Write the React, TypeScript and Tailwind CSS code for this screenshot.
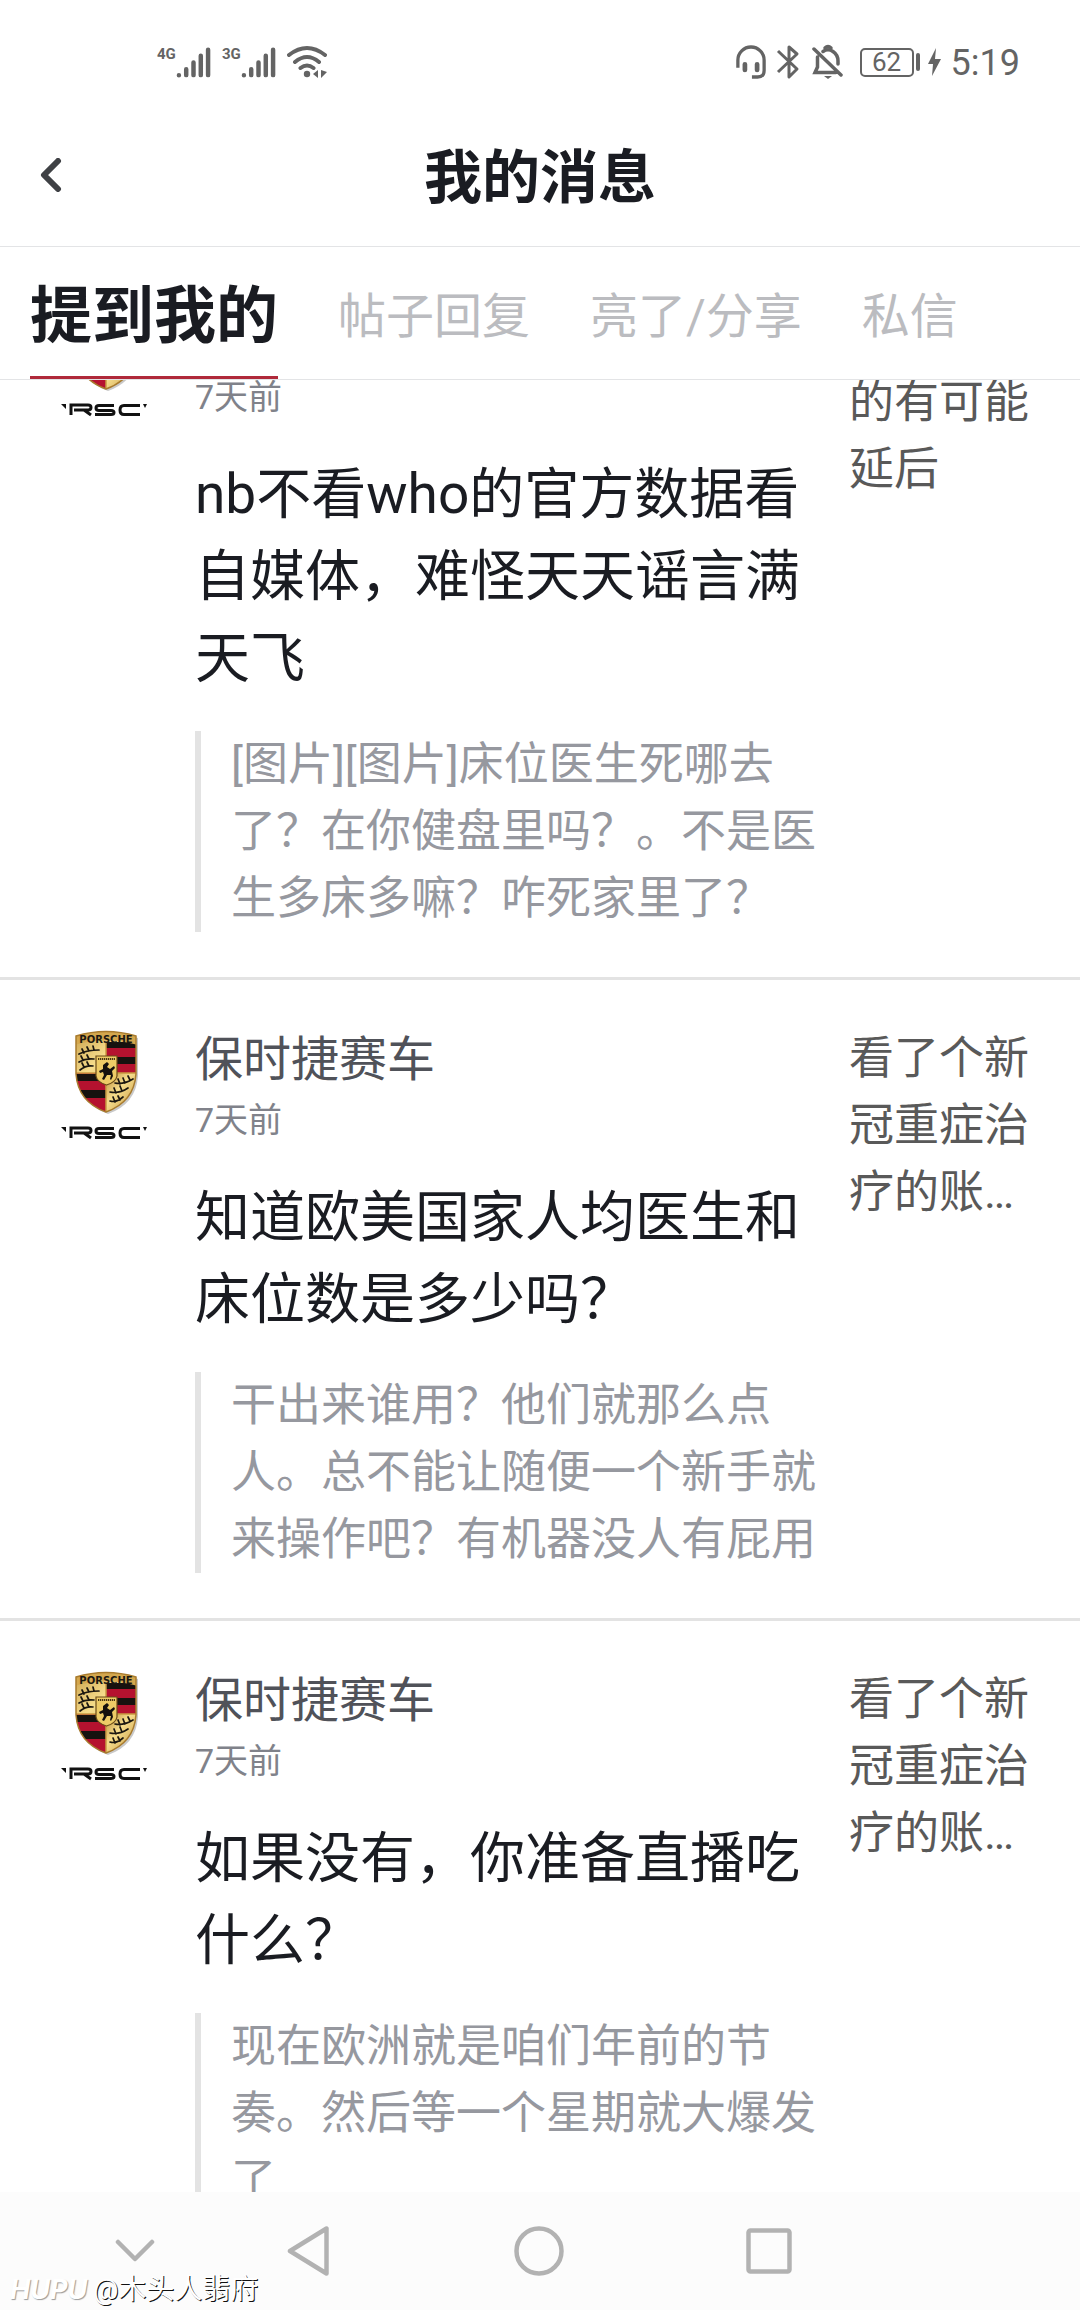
import { useLayoutEffect, useRef } from 'react';

type Message = {
  id: number;
  name: string;
  time: string;
  title: string;
  quote: string;
  source: string;
};

const tabs = ['提到我的', '帖子回复', '亮了/分享', '私信'];

const messages: Message[] = [
  {
    id: 1,
    name: '保时捷赛车',
    time: '7天前',
    title: 'nb不看who的官方数据看自媒体，难怪天天谣言满天飞',
    quote: '[图片][图片]床位医生死哪去了？在你健盘里吗？。不是医生多床多嘛？咋死家里了？',
    source: '东京奥运的有可能延后',
  },
  {
    id: 2,
    name: '保时捷赛车',
    time: '7天前',
    title: '知道欧美国家人均医生和床位数是多少吗？',
    quote: '干出来谁用？他们就那么点人。总不能让随便一个新手就来操作吧？有机器没人有屁用',
    source: '看了个新冠重症治疗的账…',
  },
  {
    id: 3,
    name: '保时捷赛车',
    time: '7天前',
    title: '如果没有，你准备直播吃什么？',
    quote: '现在欧洲就是咱们年前的节奏。然后等一个星期就大爆发了',
    source: '看了个新冠重症治疗的账…',
  },
];

const Signal = ({ label }: { label: string }) => (
  <div className="flex items-start">
    <span className="w-[19px] whitespace-nowrap font-[Roboto] text-[15px] font-bold leading-[18px]">{label}</span>
    <svg className="shrink-0" width="35" height="34" viewBox="0 0 36 34" stroke="currentColor" strokeWidth="4.6" strokeLinecap="round">
      <path d="M3 30.5v.1M10.500 24.500v6M18 17.500v13M25.500 10.500v20M33 4.500v26" />
    </svg>
  </div>
);

const StatusBar = () => (
  <div className="flex h-[120px] shrink-0 items-center justify-between pl-[157px] pr-[60px] pt-1 text-[#646464]">
    <div className="flex items-center gap-[11px]">
      <Signal label="4G" />
      <Signal label="3G" />
      <svg width="40" height="34" viewBox="0 0 40 34" fill="none" stroke="currentColor" strokeWidth="4" strokeLinecap="round">
        <path d="M2 10Q20-4 38 10M8 17Q20 7 32 17M13.500 23Q20 18 26.500 23" />
        <circle cx="20" cy="29" r="3.200" fill="currentColor" stroke="none" />
        <path d="M31 25v8l-5-4zM34 25v8l6-6z" fill="currentColor" stroke="none" />
      </svg>
    </div>
    <div className="flex items-center">
      <svg width="30" height="34" viewBox="0 0 32 36" fill="none" stroke="currentColor" strokeWidth="3.500">
        <path d="M2 24V16a14 14 0 0 1 28 0v11q0 7-7 7h-6" />
        <path d="M9.500 20.500v6M22.500 20.500v6" strokeWidth="5" strokeLinecap="round" />
      </svg>
      <svg className="ml-2.5" width="24" height="36" viewBox="0 0 24 36" fill="none" stroke="currentColor" strokeWidth="3" strokeLinejoin="round">
        <path d="M2 7l19 18-8 8V3l8 7L2 28" />
      </svg>
      <svg className="ml-3" width="32" height="36" viewBox="0 0 32 36" fill="none" stroke="currentColor" strokeWidth="3.500" strokeLinecap="round">
        <path d="M2 5l27 26M11 7.500Q16 4 21 7.500T26 17v3M5.500 13v10L3 28.500h21" />
        <path d="M13 4q3-3 6 0" />
        <path d="M12 32h8l-4 3z" fill="currentColor" stroke="none" />
      </svg>
      <div className="ml-4 flex h-[29px] w-[54px] items-center justify-center rounded-[5px] border-2 border-current font-[Roboto] text-[26px] leading-none">
        62
      </div>
      <div className="ml-0.5 h-[18px] w-1 rounded-sm bg-current" />
      <svg className="ml-2" width="13" height="28" viewBox="0 0 13 28" fill="currentColor">
        <path d="M8 0L0 16h5l-1 12 9-17H7z" />
      </svg>
      <span className="ml-2.5 pt-0.5 font-[Roboto] text-[36px] leading-none">5:19</span>
    </div>
  </div>
);

const Header = () => (
  <header className="grid h-[127px] shrink-0 grid-cols-3 items-center border-b border-[#e3e4e6] px-10 pb-4">
    <button type="button" aria-label="返回" className="w-fit">
      <svg width="22" height="34" viewBox="0 0 22 34" fill="none" stroke="#3f4145" strokeWidth="6" strokeLinecap="round" strokeLinejoin="round">
        <path d="M18 3L4 17l14 14" />
      </svg>
    </button>
    <h1 className="pt-1.5 text-center text-[58px] font-bold leading-[80px]">我的消息</h1>
  </header>
);

const Tabs = () => (
  <nav className="flex h-[133px] shrink-0 gap-[60px] border-b border-[#e3e4e6] px-[30px]">
    {tabs.map((tab, i) => (
      <button
        key={tab}
        type="button"
        className={
          i === 0
            ? 'border-b-3 border-[#b0293a] pt-2.5 text-[62px] font-bold'
            : 'border-b-3 border-transparent pt-2.5 text-[48px] text-[#bbbcc0]'
        }
      >
        {tab}
      </button>
    ))}
  </nav>
);

const Avatar = () => (
  <svg className="mt-[3px]" width="88" height="116" viewBox="0 0 88 116" role="img" aria-label="Porsche">
    <defs>
      <linearGradient id="gold" x1="0" y1="0" x2="1" y2="1">
        <stop offset="0" stopColor="#b98a35" />
        <stop offset="0.4" stopColor="#f6dd8c" />
        <stop offset="1" stopColor="#bd8c37" />
      </linearGradient>
      <clipPath id="shield">
        <path d="M16 8Q46-1 76 8V46Q74 74 46 84Q18 74 16 46z" />
      </clipPath>
    </defs>
    <path d="M18 10Q48 1 78 10V48Q76 76 48 86Q20 76 18 48z" fill="#c9c9c9" />
    <g clipPath="url(#shield)">
      <path d="M0 0h88v90H0z" fill="url(#gold)" />
      <path d="M46 19h32v26H46zM14 45h32v40H14z" fill="#b5122f" />
      <path d="M46 14h32v6H46zM46 29h32v7H46zM14 46h32v7H14zM14 62h32v8H14z" fill="#17120f" />
      <path d="M46 45h32v40H46z" fill="url(#gold)" />
      <path d="M14 0h64v17Q46 8 14 17z" fill="#d3a74e" />
      <path d="M46 14v73M16 45h60" stroke="#c89b42" strokeWidth="1.500" />
      <g fill="none" stroke="#1b1710" strokeWidth="1.700" strokeLinecap="round">
        <path d="M19 26q8-4 20-4M24 25l-2-4M29 23l-2-4M34 22l-1-4M19 34q7-4 15-3M23 32l-2-4M29 31l-2-4M20 42q6-5 13-4M24 39l-2-4M29 38l-2-4" />
        <path d="M55 55q8 2 18-4M60 56l-2-5M65 55l-2-5M70 52l-2-4M50 64q9 2 18-4M56 65l-2-5M62 63l-2-5M50 73q6 2 13-4M55 74l-2-5M60 72l-2-4" />
      </g>
    </g>
    <path d="M16 8Q46-1 76 8V46Q74 74 46 84Q18 74 16 46z" fill="none" stroke="#a87b2e" strokeWidth="1.500" />
    <path d="M36 28h21v20q-1 6-10.500 9Q37 54 36 48z" fill="#edcb66" stroke="#6b4c18" strokeWidth="1.200" />
    <path
      d="M43 37l4-3 2 2-2 3 3 2 4-3 1 2-3 3 1 5-2 4-1-1 1-4-4 0-3 5-2-1 2-4-1-3-3 1-1-2 4-2z"
      fill="#14110d"
    />
    <text x="46" y="15" textAnchor="middle" fill="#1b1710" className="font-['DejaVu_Sans'] text-[10px] font-bold">
      PORSCHE
    </text>
    <path d="M38 31h17" stroke="#4a3714" strokeWidth="2" strokeDasharray="1.300 0.700" />
    <g fill="none" stroke="#111" strokeWidth="3">
      <path d="M11 110v-10h17q3 0 3 2.500t-3 2.500H14M24 105l7 5M54 100.500H39q-3 0-3 2.500t3 2.500h12q3 0 3 2t-3 2H35M80 100.500H64q-4 0-4 4.500t4 4.500h16" />
    </g>
    <path d="M1 99h5v5zM83 99h4l-2 4z" fill="#111" />
  </svg>
);

const MessageItem = ({ message }: { message: Message }) => (
  <li className="flex items-start border-b-3 border-[#e3e3e3] px-[30px] pb-[45px] pt-[45px]">
    <div className="ml-[30px] shrink-0">
      <Avatar />
    </div>
    <div className="ml-[47px] min-w-0 flex-1 pt-[3px]">
      <p className="text-[48px] leading-[64px] text-[#505259]">{message.name}</p>
      <time className="block text-[34px] leading-[56px] text-[#80828a]">{message.time}</time>
      <h2 className="mt-7 text-[55px] leading-[82px]">{message.title}</h2>
      <blockquote className="mt-8 border-l-6 border-[#e3e3e3] pl-[30px] text-[45px] leading-[67px] text-[#96989f]">
        {message.quote}
      </blockquote>
    </div>
    <p className="ml-[29px] w-[201px] text-[45px] leading-[67px] text-[#595959]">{message.source}</p>
  </li>
);

const NavBar = () => (
  <footer className="relative grid h-[118px] shrink-0 grid-cols-[118px_1fr_1fr_1fr] items-center justify-items-center bg-[#fcfcfc] pl-[76px] pr-[196px] text-[#b2b2b2]">
    <button type="button" aria-label="收起">
      <svg width="40" height="24" viewBox="0 0 40 24" fill="none" stroke="currentColor" strokeWidth="4.500" strokeLinecap="round" strokeLinejoin="round">
        <path d="M3 3l17 17L37 3" />
      </svg>
    </button>
    <button type="button" aria-label="后退">
      <svg width="44" height="50" viewBox="0 0 44 50" fill="none" stroke="currentColor" strokeWidth="4.500" strokeLinejoin="round">
        <path d="M39.500 2.500v45L3 25z" />
      </svg>
    </button>
    <button type="button" aria-label="主页">
      <svg width="50" height="50" viewBox="0 0 50 50" fill="none" stroke="currentColor" strokeWidth="4.500">
        <circle cx="25" cy="25" r="22.500" />
      </svg>
    </button>
    <button type="button" aria-label="最近任务">
      <svg width="46" height="46" viewBox="0 0 46 46" fill="none" stroke="currentColor" strokeWidth="4.500">
        <rect x="2.500" y="2.500" width="41" height="41" rx="2" />
      </svg>
    </button>
    <div className="absolute bottom-0 left-2.5 flex items-center gap-1.5 text-white">
      <span className="font-[Inter] text-[27px] font-bold italic leading-10 [text-shadow:1px_1px_1px_#999]">HUPU</span>
      <span className="text-[28px] leading-10 [text-shadow:1px_1px_0_#111]">@木头人翡府</span>
    </div>
  </footer>
);

const App = () => {
  const listRef = useRef<HTMLUListElement>(null);

  // 恢复上次的滚动位置
  useLayoutEffect(() => {
    if (listRef.current) listRef.current.scrollTop = 123;
  }, []);

  return (
    <div
      lang="zh-CN"
      className="flex h-screen flex-col overflow-hidden bg-white font-[Roboto,'Noto_Sans_CJK_SC',sans-serif] text-[#1a1c22]"
    >
      <StatusBar />
      <Header />
      <Tabs />
      <ul ref={listRef} className="min-h-0 flex-1 overflow-y-auto [scrollbar-width:none]">
        {messages.map((message) => (
          <MessageItem key={message.id} message={message} />
        ))}
      </ul>
      <NavBar />
    </div>
  );
};

export default App;
